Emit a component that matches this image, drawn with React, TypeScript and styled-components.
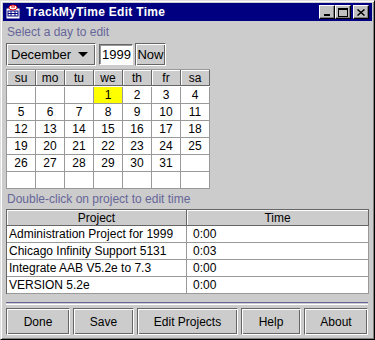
import React from "react";
import styled, { createGlobalStyle } from "styled-components";

const Global = createGlobalStyle`
  html, body { margin: 0; padding: 0; background: #cccccc; }
  body { font-family: "Liberation Sans", Arial, sans-serif; font-size: 12px; }
`;

const Frame = styled.div`
  box-sizing: border-box;
  width: 375px;
  height: 340px;
  background: #cccccc;
  border: 1px solid;
  border-color: #dfdfdf #000 #000 #dfdfdf;
  box-shadow: inset 1px 1px #fff, inset -1px -1px #808080;
  padding: 2px;
  display: flex;
  flex-direction: column;
`;

const TitleBar = styled.div`
  height: 18px;
  background: #000080;
  display: flex;
  align-items: center;
  padding: 0 3px 0 2px;
  color: #fff;
`;

const TitleText = styled.span`
  font-weight: bold;
  font-size: 12px;
  letter-spacing: 0.3px;
  margin-left: 5px;
  flex: 1;
`;

const CapButton = styled.div<{ $gap?: number }>`
  box-sizing: border-box;
  width: 16px;
  height: 14px;
  margin-left: ${p => p.$gap ?? 0}px;
  background: #c0c0c0;
  border: 1px solid;
  border-color: #fff #000 #000 #fff;
  box-shadow: inset -1px -1px #808080;
  display: flex;
  align-items: center;
  justify-content: center;
`;

const Body = styled.div`
  flex: 1;
  display: flex;
  flex-direction: column;
  padding: 3px 1px 0 3px;
`;

const Caption = styled.div<{ $top?: number }>`
  color: #666699;
  height: 16px;
  line-height: 16px;
  padding-left: 1px;
  margin-top: ${p => p.$top ?? 0}px;
`;

const ControlRow = styled.div`
  display: flex;
  align-items: center;
  gap: 2px;
  margin-top: 3px;
  height: 23px;
`;

const Etched = styled.div`
  box-sizing: border-box;
  border: 1px solid;
  border-color: #666 #fff #fff #666;
  box-shadow: inset 1px 1px #fff, inset -1px -1px #666;
  background: #cccccc;
  color: #000;
`;

const Combo = styled(Etched)`
  width: 90px;
  height: 23px;
  display: flex;
  align-items: center;
  justify-content: space-between;
  padding: 0 7px 0 4px;
  font-size: 13px;
`;

const Arrow = styled.span`
  width: 0;
  height: 0;
  border-left: 5px solid transparent;
  border-right: 5px solid transparent;
  border-top: 5px solid #000;
`;

const YearField = styled.div`
  box-sizing: border-box;
  width: 34px;
  height: 21px;
  background: #fff;
  border: 1px solid;
  border-color: #666 #fff #fff #666;
  box-shadow: inset 1px 1px #999;
  font-size: 13px;
  display: flex;
  align-items: center;
  padding-left: 2px;
  margin-left: 1px;
`;

const NowButton = styled(Etched)`
  width: 31px;
  height: 23px;
  display: flex;
  align-items: center;
  justify-content: center;
  font-size: 13px;
`;

const Calendar = styled.div`
  margin-top: 3px;
  display: grid;
  grid-template-columns: repeat(7, 29px);
  grid-auto-rows: 17px;
  width: max-content;
  border-left: 1px solid #999;
  border-top: 1px solid #999;
  background: #fff;
`;

const DayHead = styled.div`
  box-sizing: border-box;
  height: 16px;
  background: #cccccc;
  border-right: 1px solid #666;
  border-bottom: 1px solid #666;
  box-shadow: inset 1px 1px #fff;
  display: flex;
  align-items: center;
  justify-content: center;
  font-size: 12px;
`;

const DayCell = styled.div<{ $selected?: boolean }>`
  box-sizing: border-box;
  background: ${p => (p.$selected ? "#ffff00" : "#fff")};
  border-right: 1px solid #999;
  border-bottom: 1px solid #999;
  display: flex;
  align-items: center;
  justify-content: center;
  font-size: 12px;
`;

const Table = styled.div`
  margin-top: 2px;
  width: 362px;
  border-left: 1px solid #666;
  border-top: 1px solid #666;
  background: #fff;
  display: grid;
  grid-template-columns: 180px 182px;
  grid-template-rows: 16px repeat(4, 17px);
`;

const HeadCell = styled.div`
  box-sizing: border-box;
  background: #cccccc;
  border-right: 1px solid #666;
  border-bottom: 1px solid #666;
  box-shadow: inset 1px 1px #fff;
  display: flex;
  align-items: center;
  justify-content: center;
  font-size: 12px;
`;

const Cell = styled.div<{ $indent: number }>`
  box-sizing: border-box;
  border-right: 1px solid #999;
  border-bottom: 1px solid #999;
  display: flex;
  align-items: center;
  padding-left: ${p => p.$indent}px;
  font-size: 12px;
  white-space: nowrap;
  overflow: hidden;
`;

const Separator = styled.div`
  margin-top: 8px;
  height: 1px;
  border-top: 1px solid #666699;
  border-bottom: 1px solid #fff;
  margin-right: 3px;
`;

const ButtonRow = styled.div`
  display: flex;
  gap: 3px;
  margin-top: 3px;
`;

const Button = styled(Etched)<{ $w: number }>`
  width: ${p => p.$w}px;
  height: 27px;
  display: flex;
  align-items: center;
  justify-content: center;
  font-size: 12px;
`;

const AppIcon = () => (
  <svg width="16" height="16" viewBox="0 0 16 16">
    <rect x="1" y="4" width="14" height="11" fill="#fff" stroke="#000080" />
    <ellipse cx="8" cy="3.5" rx="4" ry="2.5" fill="#fff" stroke="#e00000" />
    <path d="M6 3h4" stroke="#e00000" />
    <rect x="3" y="7" width="10" height="5" fill="none" stroke="#000080" />
    <path d="M3 9.5h10M6 7v5M10 7v5" stroke="#000080" />
  </svg>
);

const days: (number | null)[] = [
  null, null, null, 1, 2, 3, 4,
  ...Array.from({ length: 27 }, (_, i) => i + 5),
  null, null, null, null, null, null, null, null,
];

const projects = [
  ["Administration Project for 1999", "0:00"],
  ["Chicago Infinity Support 5131", "0:03"],
  ["Integrate AAB V5.2e to 7.3", "0:00"],
  ["VERSION 5.2e", "0:00"],
];

export default function App() {
  return (
    <>
      <Global />
      <Frame>
        <TitleBar>
          <AppIcon />
          <TitleText>TrackMyTime Edit Time</TitleText>
          <CapButton>
            <svg width="8" height="8"><rect x="1" y="6" width="6" height="2" fill="#000" /></svg>
          </CapButton>
          <CapButton>
            <svg width="10" height="9"><rect x="0.5" y="0.5" width="9" height="8" fill="none" stroke="#000" /><rect x="0" y="1" width="10" height="1" fill="#000" /></svg>
          </CapButton>
          <CapButton $gap={2}>
            <svg width="8" height="7"><path d="M0.5 0.5l7 6M7.5 0.5l-7 6" stroke="#000" strokeWidth="1.5" /></svg>
          </CapButton>
        </TitleBar>
        <Body>
          <Caption>Select a day to edit</Caption>
          <ControlRow>
            <Combo>December<Arrow /></Combo>
            <YearField>1999</YearField>
            <NowButton>Now</NowButton>
          </ControlRow>
          <Calendar>
            {["su", "mo", "tu", "we", "th", "fr", "sa"].map(d => (
              <DayHead key={d}>{d}</DayHead>
            ))}
            {days.map((d, i) => (
              <DayCell key={i} $selected={d === 1}>{d ?? ""}</DayCell>
            ))}
          </Calendar>
          <Caption $top={2}>Double-click on project to edit time</Caption>
          <Table>
            <HeadCell>Project</HeadCell>
            <HeadCell>Time</HeadCell>
            {projects.map(([name, time]) => (
              <React.Fragment key={name}>
                <Cell $indent={2}>{name}</Cell>
                <Cell $indent={6}>{time}</Cell>
              </React.Fragment>
            ))}
          </Table>
          <Separator />
          <ButtonRow>
            <Button $w={64}>Done</Button>
            <Button $w={61}>Save</Button>
            <Button $w={101}>Edit Projects</Button>
            <Button $w={60}>Help</Button>
            <Button $w={64}>About</Button>
          </ButtonRow>
        </Body>
      </Frame>
    </>
  );
}
